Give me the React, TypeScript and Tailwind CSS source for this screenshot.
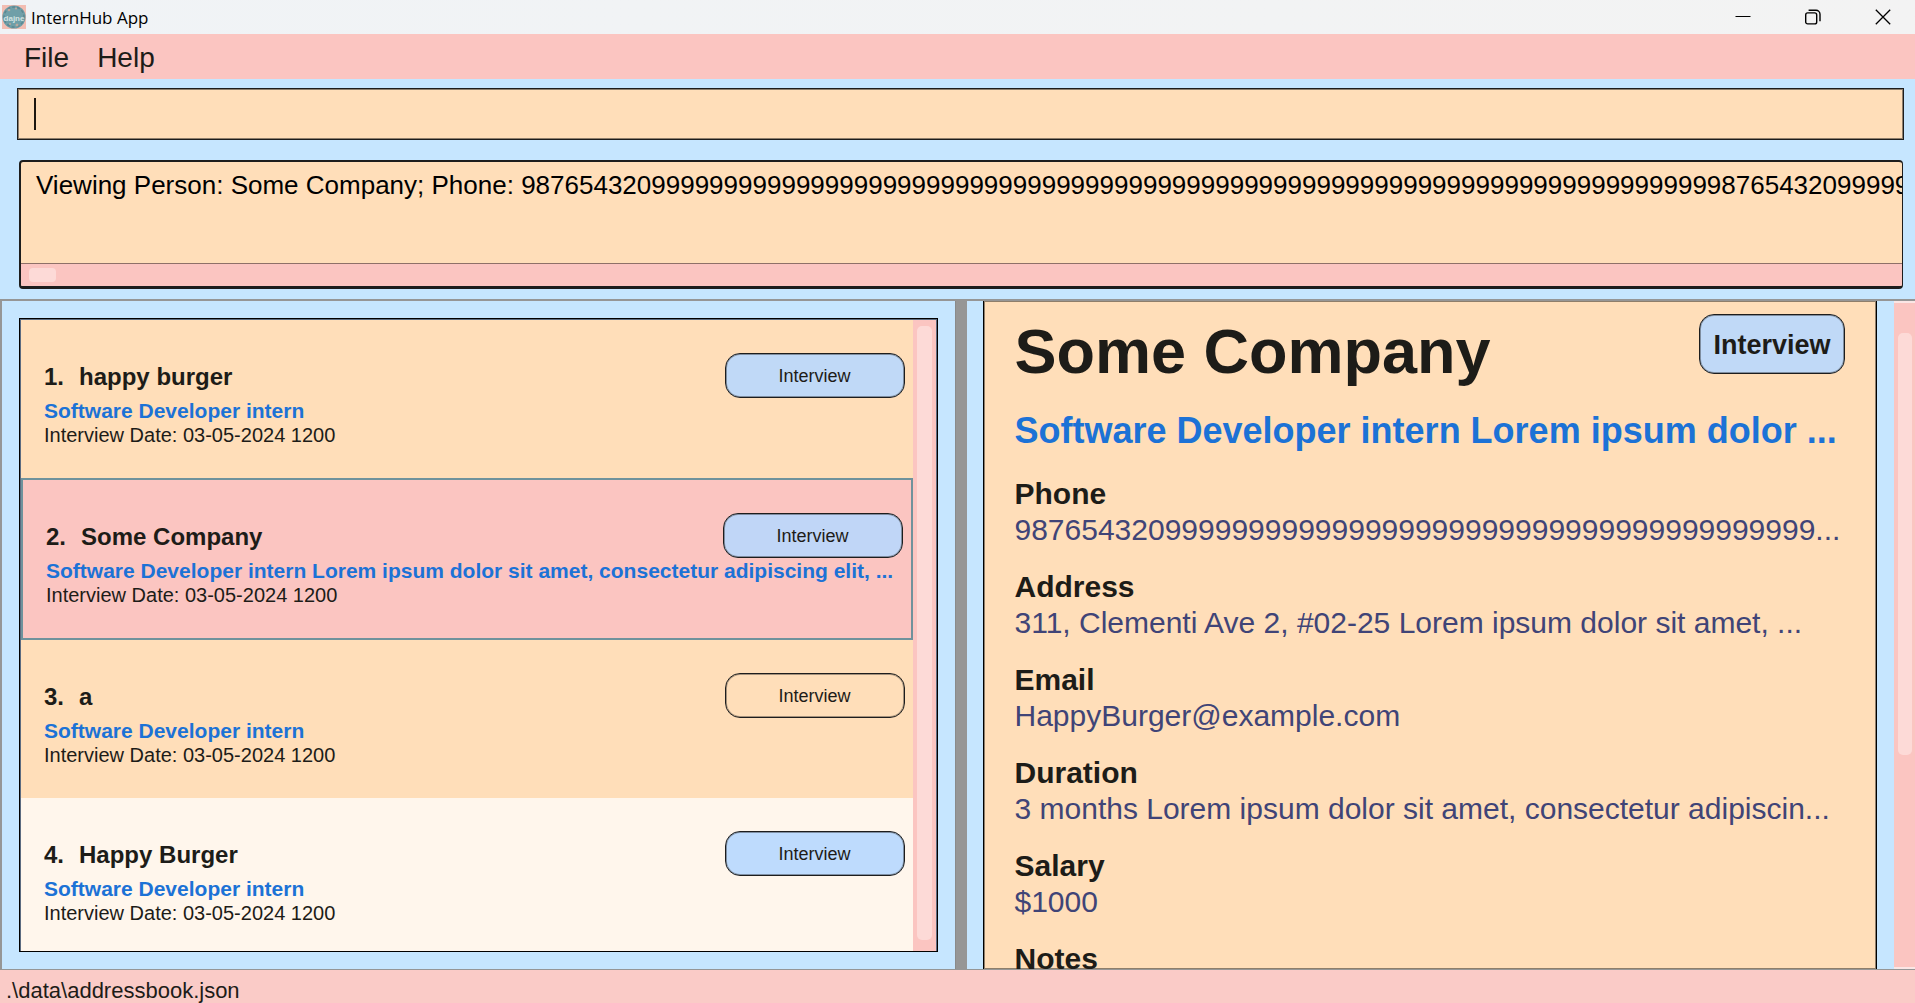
import React from "react";

type Company = {
  id: number;
  name: string;
  role: string;
  date: string;
  row: string;
  badge: string;
};

const companies: Company[] = [
  { id: 1, name: "happy burger", role: "Software Developer intern", date: "03-05-2024 1200", row: "bg-[#ffdeb9]", badge: "bg-[#c0d9f7]" },
  {
    id: 2,
    name: "Some Company",
    role: "Software Developer intern Lorem ipsum dolor sit amet, consectetur adipiscing elit, ...",
    date: "03-05-2024 1200",
    row: "bg-[#fbc5c1] border-2 border-[#6f929c]",
    badge: "bg-[#c0d6f7]",
  },
  { id: 3, name: "a", role: "Software Developer intern", date: "03-05-2024 1200", row: "bg-[#ffdeb9]", badge: "bg-transparent" },
  { id: 4, name: "Happy Burger", role: "Software Developer intern", date: "03-05-2024 1200", row: "bg-[#fff6ec]", badge: "bg-[#bedbfd]" },
];

const fields = [
  { label: "Phone", value: "987654320" + "9".repeat(39) + "..." },
  { label: "Address", value: "311, Clementi Ave 2, #02-25 Lorem ipsum dolor sit amet, ..." },
  { label: "Email", value: "HappyBurger@example.com" },
  { label: "Duration", value: "3 months Lorem ipsum dolor sit amet, consectetur adipiscin..." },
  { label: "Salary", value: "$1000" },
  { label: "Notes", value: "" },
];

const phone = "987654320" + "9".repeat(73);

function AppIcon() {
  return (
    <svg viewBox="0 0 24 24" className="size-6" aria-hidden="true">
      <rect width="24" height="24" fill="#f2bdb2" />
      <circle cx="12" cy="12" r="11.6" fill="#6f9fa8" />
      <circle cx="12" cy="12" r="10" fill="none" stroke="#5b8791" strokeWidth="1.5" strokeDasharray="3 2" />
      <g fill="#b9a9a0">
        <circle cx="7" cy="5" r="1.3" />
        <circle cx="14" cy="3.5" r="1.1" />
        <circle cx="15" cy="20" r="1.5" />
        <circle cx="8" cy="19" r="1" />
      </g>
      <text x="12" y="15.5" textAnchor="middle" fontSize="8" fontWeight="bold" fill="#d3e3e3">
        dajne
      </text>
    </svg>
  );
}

function TitleBar() {
  return (
    <header className="flex h-[34px] shrink-0 items-center justify-between bg-gradient-to-r from-[#f0f3f6] to-[#f3f3f3]">
      <div className="flex items-center gap-[5px] pl-[2px]">
        <AppIcon />
        <h1 className="pt-[2px] font-['Open_Sans','Noto_Sans',sans-serif] text-[17px] leading-6 text-black">InternHub App</h1>
      </div>
      <div className="flex h-full items-center gap-[38px] pr-[16px] text-black">
        <button type="button" aria-label="Minimize" className="flex w-8 justify-center">
          <svg viewBox="0 0 16 16" className="size-4" fill="none" stroke="currentColor">
            <path d="M0.5 7.5h15" />
          </svg>
        </button>
        <button type="button" aria-label="Restore" className="flex w-8 justify-center">
          <svg viewBox="0 0 16 16" className="size-4" fill="none" stroke="currentColor" strokeWidth="1.4">
            <rect x="0.7" y="3.9" width="11" height="11" rx="2" />
            <path d="M3.6 1.2H11a4 4 0 0 1 4 4v7" />
          </svg>
        </button>
        <button type="button" aria-label="Close" className="flex w-8 justify-center">
          <svg viewBox="0 0 16 16" className="size-4" fill="none" stroke="currentColor" strokeWidth="1.3">
            <path d="M0.8 0.8l14.4 14.4M15.2 0.8L0.8 15.2" />
          </svg>
        </button>
      </div>
    </header>
  );
}

function CompanyRow({ c }: { c: Company }) {
  return (
    <li className={`shrink-0 pt-[33px] pr-2 pb-8 pl-[23px] ${c.row}`}>
      <div className="flex h-[45px] items-end justify-between">
        <h2 className="flex gap-[15px] pb-[7px] text-2xl leading-7 font-bold">
          <span>{c.id}.</span>
          <span>{c.name}</span>
        </h2>
        <span
          className={`flex h-[45px] w-[180px] items-center justify-center rounded-[15px] border border-[#1d1d1d] text-lg shadow-[inset_0_0_0_1px_rgba(29,29,29,0.4)] ${c.badge}`}
        >
          Interview
        </span>
      </div>
      <p className="text-[21px] leading-[26px] font-bold whitespace-nowrap text-[#1c72d6]">{c.role}</p>
      <p className="text-[20px] leading-[22px]">Interview Date: {c.date}</p>
    </li>
  );
}

export default function App() {
  return (
    <div className="flex h-screen flex-col overflow-hidden bg-[#c6e6ff] font-['Liberation_Sans',Arial,sans-serif] text-[#1d1c18]">
      <TitleBar />
      <nav className="flex h-[45px] shrink-0 items-center gap-7 bg-[#fbc5c1] px-6 pt-[2px] text-[28px] leading-8">
        <button type="button">File</button>
        <button type="button">Help</button>
      </nav>

      <div className="shrink-0 pt-[9px] pr-[11px] pb-5 pl-[17px]">
        <div className="flex h-[52px] items-center border border-[#1d1d1d] bg-[#ffdeb9] pl-4 shadow-[inset_0_0_0_1px_rgba(29,29,29,0.5)]">
          <span className="h-8 w-[2px] bg-[#1d1710]" />
          <input
            type="text"
            aria-label="Command"
            className="h-full min-w-0 flex-1 bg-transparent text-[26px] outline-none"
          />
        </div>
      </div>

      <div className="shrink-0 pr-3 pb-[10px] pl-[19px]">
        <section className="flex h-[129px] flex-col overflow-hidden rounded-[4px] border-t-2 border-r border-b-[3px] border-l-2 border-[#1d1d1d] bg-[#ffdeb9]">
          <output className="block flex-1 pt-2 pl-[15px] text-[26px] leading-[30px] whitespace-nowrap text-black">
            Viewing Person: Some Company; Phone: {phone}
            {phone}
          </output>
          <div className="h-[23px] shrink-0 border-t border-[#8e7068] bg-[#fbc5c1] py-1 pl-2">
            <div className="h-[14px] w-[27px] rounded-[4px] bg-[#fddad7]" />
          </div>
        </section>
      </div>

      <main className="flex min-h-0 flex-1 border-t-2 border-b border-[#969696]">
        <section className="flex w-[calc(50%-3px)] shrink-0 border-l-2 border-[#969696] p-[17px]">
          <div className="flex min-w-0 flex-1 overflow-hidden border border-black bg-[#ffdeb9]">
            <ul className="flex min-w-0 flex-1 flex-col overflow-hidden border-t border-l border-[#5c6b80]">
              {companies.map((c) => (
                <CompanyRow key={c.id} c={c} />
              ))}
            </ul>
            <div className="flex w-6 shrink-0 border-t border-r border-[#5c6b80] bg-[#fbc5c1] px-1 pt-[6px] pb-[11px]">
              <div className="flex-1 rounded-[5px] bg-[#fddad7]" />
            </div>
          </div>
        </section>

        <div className="w-3 shrink-0 border-l border-[#8a8a8a] bg-[#969696]" />

        <section className="flex min-w-0 flex-1">
          <div className="flex min-w-0 flex-1 pr-[17px] pl-4">
            <article className="min-w-0 flex-1 overflow-hidden border-x border-black bg-[#ffdeb9] px-[31px] pt-[13px] shadow-[inset_0_0_0_1px_rgba(29,29,29,0.5)]">
              <div className="flex items-start justify-between">
                <h2 className="text-[63px] leading-[74px] font-bold whitespace-nowrap">Some Company</h2>
                <span className="flex h-[60px] w-[146px] items-center justify-center rounded-[15px] border border-[#1d1d1d] bg-[#c0d9f7] pt-[2px] text-[27px] font-bold shadow-[inset_0_0_0_1px_rgba(29,29,29,0.4)]">
                  Interview
                </span>
              </div>
              <p className="mt-[22px] text-[36px] leading-[42px] font-bold whitespace-nowrap text-[#1c72d6]">
                Software Developer intern Lorem ipsum dolor ...
              </p>
              <dl className="mt-6 text-[30px] leading-9 whitespace-nowrap">
                {fields.map((f) => (
                  <div key={f.label} className="mb-[21px]">
                    <dt className="font-bold">{f.label}</dt>
                    <dd className="text-[#404477]">{f.value}</dd>
                  </div>
                ))}
              </dl>
            </article>
          </div>
          <div className="w-[21px] shrink-0 border-t-2 border-b-2 border-[#fbe6e5] bg-[#fbc5c1] px-1 pt-[30px]">
            <div className="h-[422px] w-[14px] rounded-[5px] bg-[#fddad7]" />
          </div>
        </section>
      </main>

      <footer className="h-[33px] shrink-0 bg-[#facbc7] px-[6px] pt-2 text-[22px] leading-[25px]">
        .\data\addressbook.json
      </footer>
    </div>
  );
}
